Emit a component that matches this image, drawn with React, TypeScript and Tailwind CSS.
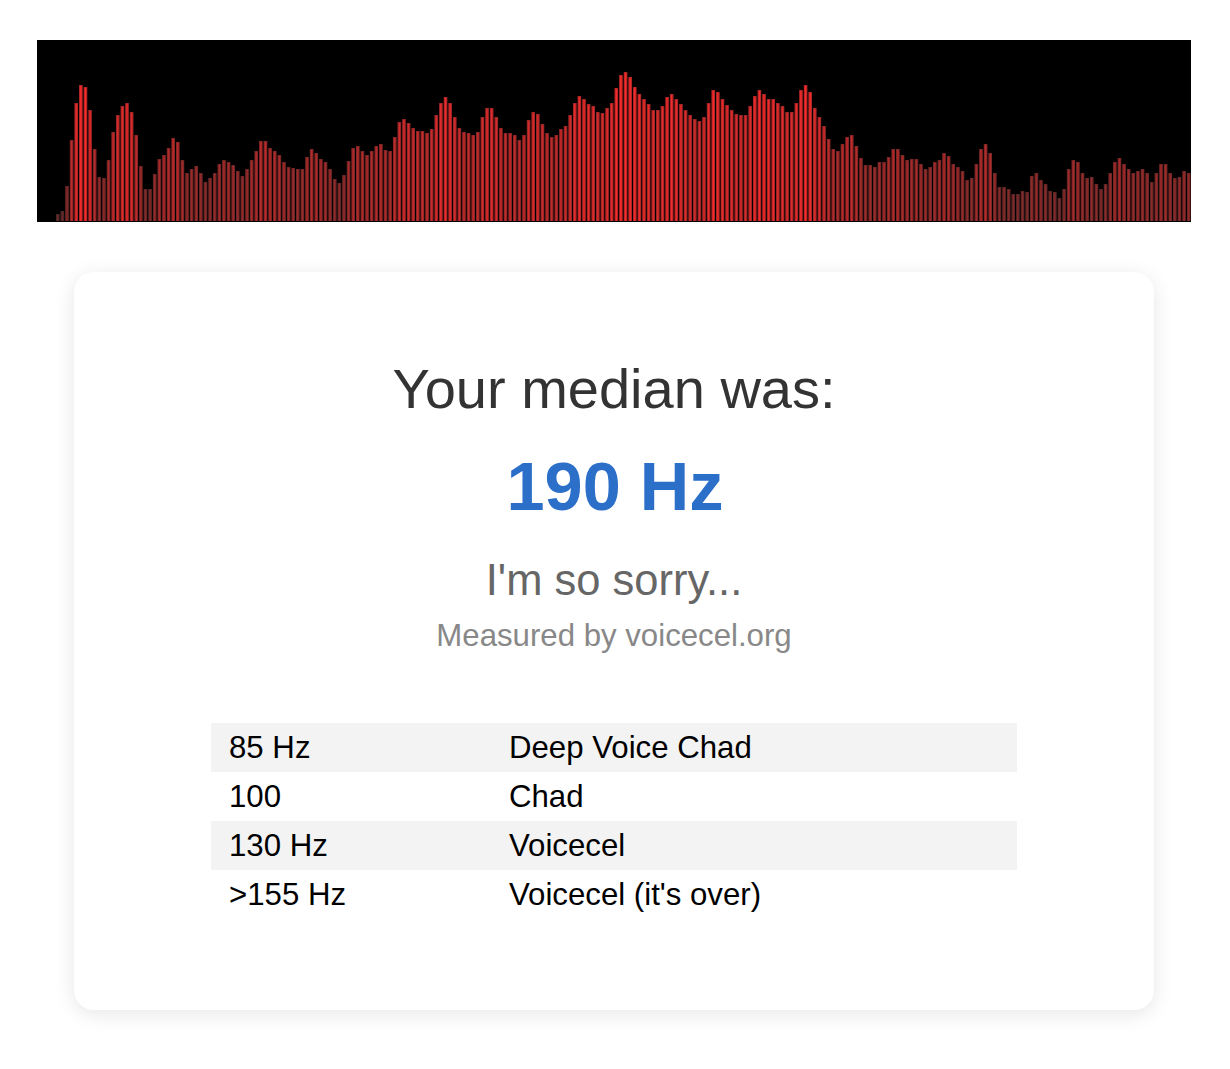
const HEIGHTS = [
  0, 0, 0, 0, 7, 10, 35, 81, 118, 136, 134, 111, 72, 44, 43, 61, 89, 106, 115, 118, 109, 86, 55, 32, 32, 47, 62, 66, 73,
  83, 79, 61, 48, 52, 55, 48, 39, 43, 48, 57, 61, 59, 56, 50, 45, 52, 61, 70, 80, 80, 73, 70, 66, 59, 54, 53, 52, 52,
  64, 72, 68, 62, 59, 52, 42, 38, 46, 60, 73, 75, 70, 66, 70, 75, 77, 71, 70, 84, 99, 102, 98, 93, 90, 90, 88, 92, 106,
  118, 124, 118, 104, 93, 89, 88, 86, 89, 104, 113, 113, 104, 93, 88, 88, 86, 81, 86, 101, 109, 107, 97, 88, 84, 86,
  92, 95, 106, 118, 125, 122, 117, 115, 109, 108, 113, 118, 133, 146, 149, 144, 134, 127, 122, 117, 111, 111, 115, 124,
  127, 122, 117, 111, 106, 102, 100, 104, 118, 131, 129, 122, 116, 111, 107, 106, 106, 115, 125, 131, 127, 122, 122,
  118, 115, 109, 109, 118, 131, 136, 129, 113, 104, 95, 82, 72, 70, 77, 84, 86, 75, 63, 56, 56, 54, 59, 59, 64, 72, 72,
  66, 61, 62, 62, 57, 52, 54, 59, 61, 68, 65, 57, 54, 50, 41, 43, 57, 72, 77, 68, 48, 34, 34, 32, 27, 27, 30, 29, 45,
  48, 41, 37, 30, 29, 23, 32, 52, 61, 59, 48, 43, 44, 37, 32, 37, 48, 59, 63, 57, 52, 48, 50, 52, 48, 39, 48, 57, 57,
  48, 43, 44, 50, 48,
];

const BAR = 1154 / 250;

function Spectrum() {
  return (
    <div className="h-[182px] w-[1154px] bg-black">
      <svg width="1154" height="182" viewBox="0 0 1154 182" className="block">
        <defs>
          <filter id="soft" x="-2%" y="-2%" width="104%" height="104%">
            <feGaussianBlur stdDeviation="0.5 0.4" />
          </filter>
        </defs>
        <g filter="url(#soft)">
          {HEIGHTS.map((h, i) => {
            // taller bars are redder, each one has a brighter core
            const core = Math.min(250, Math.round(h * 1.15 + 95));
            const body = Math.round(core * 0.72);
            return (
              <g key={i}>
                <rect x={i * BAR + 0.5} y={181 - h} width={BAR - 1} height={h} fill={`rgb(${body} 38 38)`} />
                <rect x={i * BAR + 1.6} y={182 - h} width={BAR - 3.2} height={h - 1} fill={`rgb(${core} 42 42)`} />
              </g>
            );
          })}
        </g>
      </svg>
    </div>
  );
}

const ROWS = [
  ["85 Hz", "Deep Voice Chad"],
  ["100", "Chad"],
  ["130 Hz", "Voicecel"],
  [">155 Hz", "Voicecel (it's over)"],
];

export default function App() {
  return (
    <div className="flex min-h-[1069px] w-[1228px] flex-col items-center bg-white pt-10 font-['Liberation_Sans',Arial,sans-serif]">
      <Spectrum />
      <div className="mt-[50px] flex h-[738px] w-[1080px] flex-col items-center rounded-[20px] bg-white pt-[85px] shadow-[0_4px_20px_rgba(0,0,0,0.1)]">
        <h1 className="text-[56px] leading-[64px] font-normal text-[#333]">Your median was:</h1>
        <div className="mt-[26px] pl-[2px] text-[68.5px] leading-[80px] font-bold text-[#2b6fc9]">190 Hz</div>
        <div className="mt-[27px] text-[43.5px] leading-[52px] text-[#666]">I'm so sorry...</div>
        <div className="mt-[12px] text-[31.2px] leading-[36px] text-[#888]">Measured by voicecel.org</div>
        <table className="mt-[69px] w-[806px] border-collapse text-[31.2px] leading-[49px] text-black">
          <tbody>
            {ROWS.map((row, i) => (
              <tr key={row[0]} className={i % 2 === 0 ? "bg-[#f3f3f3]" : ""}>
                <td className="w-[280px] px-[18px] py-0">{row[0]}</td>
                <td className="px-[18px] py-0">{row[1]}</td>
              </tr>
            ))}
          </tbody>
        </table>
      </div>
    </div>
  );
}
